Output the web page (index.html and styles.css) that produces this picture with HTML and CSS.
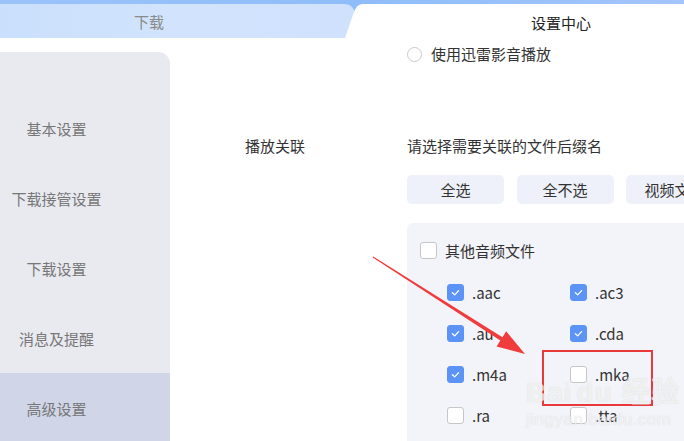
FILE: index.html
```html
<!DOCTYPE html>
<html lang="zh-CN">
<head>
<meta charset="utf-8">
<title>设置中心</title>
<link rel="stylesheet" href="styles.css">
</head>
<body>
<div class="app">
  <div class="tabs">
    <div class="tab tab-left">下载</div>
    <div class="tab tab-right">设置中心</div>
  </div>
  <div class="body">
    <nav class="sidebar">
      <div class="nav-item">基本设置</div>
      <div class="nav-item">下载接管设置</div>
      <div class="nav-item">下载设置</div>
      <div class="nav-item">消息及提醒</div>
      <div class="nav-item active">高级设置</div>
    </nav>
    <main class="main">
      <div class="row">
        <div class="label"></div>
        <div class="content">
          <label class="radio-line"><span class="radio"></span>使用迅雷影音播放</label>
        </div>
      </div>
      <div class="row assoc">
        <div class="label">播放关联</div>
        <div class="content">
          <div class="hint">请选择需要关联的文件后缀名</div>
          <div class="buttons">
            <div class="btn">全选</div>
            <div class="btn">全不选</div>
            <div class="btn">视频文件</div>
          </div>
          <div class="panel">
            <div class="check-line"><span class="cb"></span>其他音频文件</div>
            <div class="grid">
              <div class="check-line"><span class="cb on"><svg viewBox="0 0 17 17"><polyline points="5,8.8 7.6,11.2 12,6.4"/></svg></span>.aac</div>
              <div class="check-line"><span class="cb on"><svg viewBox="0 0 17 17"><polyline points="5,8.8 7.6,11.2 12,6.4"/></svg></span>.ac3</div>
              <div class="check-line"><span class="cb on"><svg viewBox="0 0 17 17"><polyline points="5,8.8 7.6,11.2 12,6.4"/></svg></span>.au</div>
              <div class="check-line"><span class="cb on"><svg viewBox="0 0 17 17"><polyline points="5,8.8 7.6,11.2 12,6.4"/></svg></span>.cda</div>
              <div class="check-line"><span class="cb on"><svg viewBox="0 0 17 17"><polyline points="5,8.8 7.6,11.2 12,6.4"/></svg></span>.m4a</div>
              <div class="check-line"><span class="cb"></span>.mka</div>
              <div class="check-line"><span class="cb"></span>.ra</div>
              <div class="check-line"><span class="cb"></span>.tta</div>
            </div>
          </div>
        </div>
      </div>
    </main>
  </div>
</div>
<svg class="arrow" width="684" height="441" viewBox="0 0 684 441">
  <polygon points="373.3,256.6 502.5,337.2 506.2,331.3 525,354 496.6,346.5 500.3,340.6 372.7,257.4"/>
</svg>
<div class="redbox"></div>
<div class="watermark">
  <div class="wm-big">Bai<span class="wm-du">du</span> 经验</div>
  <div class="wm-small">jingyan.baidu.com</div>
</div>
</body>
</html>
```

FILE: styles.css
```css
html, body {
  margin: 0;
  padding: 0;
  width: 684px;
  height: 441px;
  overflow: hidden;
  background: #ffffff;
  font-family: "Noto Sans CJK SC", "Noto Sans", sans-serif;
  font-size: 15px;
  color: #333;
}
.app {
  width: 824px;
  margin-left: -57px;
  height: 441px;
  display: flex;
  flex-direction: column;
}
.tabs {
  height: 38px;
  box-sizing: border-box;
  padding-top: 4px;
  background: linear-gradient(90deg, #9cc4fb, #8fbdf9 50%, #a9c6fb);
  display: flex;
}
.tab {
  flex: 1;
  display: flex;
  align-items: center;
  justify-content: center;
  position: relative;
  font-size: 15px;
}
.tab-left {
  background: linear-gradient(90deg, #c8defc, #d2e4fd 60%, #cfe1fd);
  color: #8a8a8a;
  border-top-right-radius: 10px;
}
.tab-right {
  color: #222;
  padding-top: 2px;
  background: #fff;
  border-top-left-radius: 8px;
}
.tab-right::before {
  content: "";
  position: absolute;
  left: -10px;
  top: 0;
  bottom: 0;
  width: 24px;
  background: #fff;
  border-top-left-radius: 8px;
  transform: skewX(-19deg);
  transform-origin: bottom left;
}
.body {
  flex: 1;
  display: flex;
  min-height: 0;
}
.sidebar {
  width: 227px;
  margin-top: 14px;
  padding-top: 41px;
  background: #e9eaf0;
  border-top-right-radius: 12px;
  box-sizing: border-box;
}
.nav-item {
  height: 70px;
  display: flex;
  align-items: center;
  justify-content: center;
  color: #777;
  font-size: 15px;
}
.nav-item.active {
  background: #d0d5e8;
}
.main {
  flex: 1;
  padding-left: 75px;
  padding-top: 6px;
}
.row {
  display: flex;
}
.label {
  width: 162px;
  flex: none;
  line-height: 20px;
  color: #333;
}
.content {
  flex: 1;
}
.radio-line {
  display: flex;
  align-items: center;
  line-height: 20px;
  color: #333;
}
.radio {
  width: 13px;
  height: 13px;
  border: 1px solid #c9c9c9;
  border-radius: 50%;
  margin-right: 9px;
  background: #fff;
}
.assoc {
  margin-top: 72px;
}
.hint {
  line-height: 20px;
}
.buttons {
  display: flex;
  gap: 12.5px;
  margin-top: 19px;
}
.btn {
  width: 97px;
  height: 29px;
  flex: none;
  background: #eef1f9;
  border-radius: 5px;
  display: flex;
  align-items: center;
  justify-content: center;
  color: #333;
}
.panel {
  margin-top: 19px;
  background: #f3f4f9;
  border-radius: 6px;
  padding: 17.5px 0 40px 13px;
  height: 300px;
}
.check-line {
  display: flex;
  align-items: center;
  height: 20px;
  color: #333;
}
.cb {
  width: 17px;
  height: 17px;
  box-sizing: border-box;
  border: 1px solid #c6c6c6;
  border-radius: 3px;
  background: #fff;
  margin-right: 8px;
  flex: none;
  display: flex;
}
.cb.on {
  background: #5b93f7;
  border-color: #5b93f7;
}
.cb svg {
  width: 15px;
  height: 15px;
}
.cb polyline {
  fill: none;
  stroke: #fff;
  stroke-width: 1.5;
  stroke-linecap: round;
  stroke-linejoin: round;
}
.grid {
  display: grid;
  grid-template-columns: 123px 123px;
  row-gap: 21.3px;
  margin-top: 21.5px;
  padding-left: 27px;
}
.arrow {
  position: absolute;
  left: 0;
  top: 0;
  pointer-events: none;
}
.arrow polygon {
  fill: #f03c3c;
}
.redbox {
  position: absolute;
  left: 542px;
  top: 350px;
  width: 111px;
  height: 56px;
  box-sizing: border-box;
  border: 2px solid #e8383a;
}
.watermark {
  position: absolute;
  left: 526px;
  top: 376px;
  color: rgba(255, 255, 255, 0.7);
  text-shadow: 0 0 1px rgba(120, 120, 120, 0.3);
  font-family: "Liberation Sans", sans-serif;
  pointer-events: none;
}
.wm-big {
  font-size: 28px;
  font-weight: bold;
  line-height: 34px;
  letter-spacing: 1px;
}
.wm-du {
  margin-left: 4px;
}
.wm-small {
  font-size: 17px;
  line-height: 20px;
  letter-spacing: 0.5px;
}
```
